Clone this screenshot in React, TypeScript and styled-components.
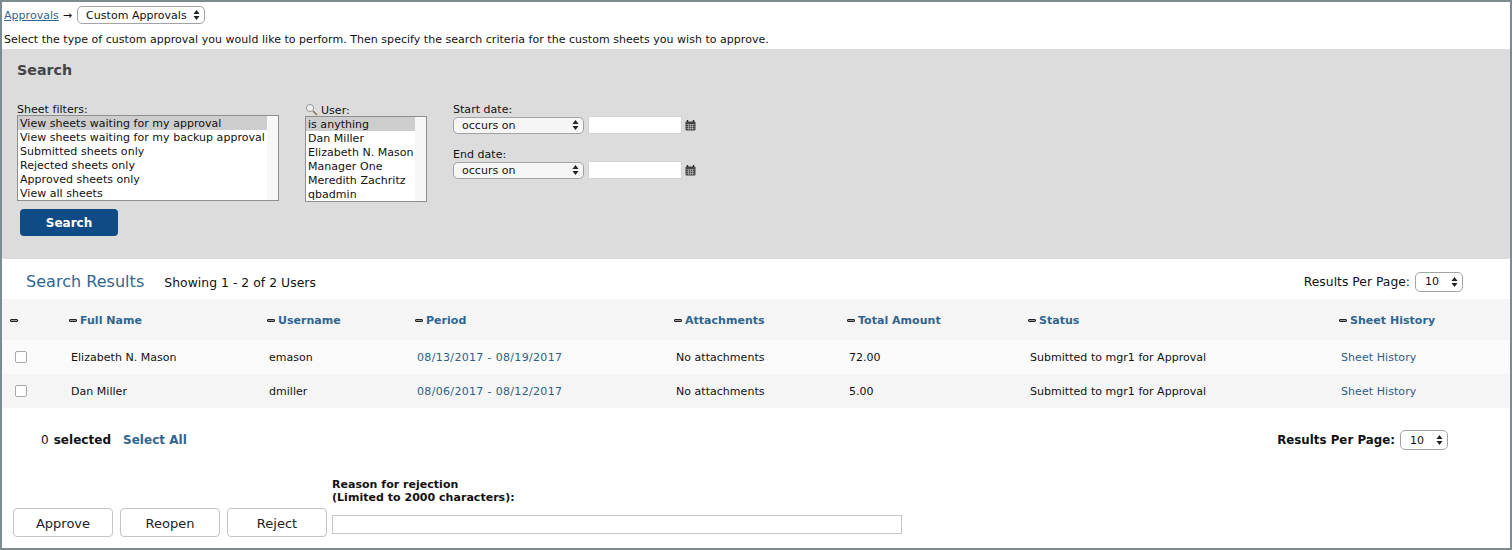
import React from 'react';
import styled, { createGlobalStyle } from 'styled-components';

const GlobalStyle = createGlobalStyle`
    html, body {
        margin: 0;
        padding: 0;
        background: #fff;
    }
    body {
        font-family: "DejaVu Sans", Verdana, sans-serif;
        font-size: 11px;
        letter-spacing: 0.03px;
        color: #111;
    }
`;

const LINK = '#2f6590';

const Frame = styled.div`
    box-sizing: border-box;
    width: 1512px;
    height: 550px;
    border: 2px solid #7d8a8e;
    overflow: hidden;
    background: #fff;
`;

const Breadcrumb = styled.div`
    display: flex;
    align-items: center;
    height: 18px;
    margin-top: 4px;
    padding-left: 2px;
    gap: 4px;
`;
const CrumbLink = styled.a`
    color: ${LINK};
    text-decoration: underline;
`;
const CrumbArrow = styled.span`
    margin-right: 1px;
`;
const Intro = styled.div`
    height: 25px;
    padding: 9px 0 0 2px;
    box-sizing: border-box;
    line-height: 14px;
`;

const SearchPanel = styled.section`
    box-sizing: border-box;
    height: 210px;
    background: #dcdcdc;
    padding: 13px 15px 0;
`;
const PanelTitle = styled.h2`
    margin: 0;
    font-size: 14.2px;
    line-height: 17px;
    font-weight: bold;
    color: #444;
`;
const FilterRow = styled.div`
    display: flex;
    margin-top: 24px;
`;
const FilterColumn = styled.div<{ $width: number }>`
    width: ${p => p.$width}px;
    flex: none;
`;
const FieldLabel = styled.div<{ $height?: number; $lineHeight?: number }>`
    display: flex;
    align-items: flex-start;
    gap: 3px;
    height: ${p => p.$height ?? 13}px;
    line-height: ${p => p.$lineHeight ?? 13}px;
`;
const ListBox = styled.div<{ $width: number }>`
    box-sizing: border-box;
    width: ${p => p.$width}px;
    height: 86px;
    border: 1px solid #8f8f8f;
    background: #fff;
    display: flex;
`;
const ListItems = styled.div`
    flex: 1;
    min-width: 0;
`;
const ListItem = styled.div<{ $selected?: boolean }>`
    height: 14px;
    line-height: 16px;
    padding-left: 2px;
    white-space: nowrap;
    overflow: hidden;
    background: ${p => (p.$selected ? '#cdcdcd' : 'transparent')};
`;
const ListTrack = styled.div`
    width: 11px;
    flex: none;
    background: #f7f7f7;
`;
const SearchButton = styled.button`
    display: block;
    width: 98px;
    height: 27px;
    margin: 8px 0 0 3px;
    padding: 0;
    border: none;
    border-radius: 4px;
    background: #0f4c85;
    color: #fff;
    font: bold 12px "DejaVu Sans", Verdana, sans-serif;
`;

const DateColumn = styled.div`
    display: flex;
    flex-direction: column;
    gap: 14px;
`;
const DateControls = styled.div`
    display: flex;
    align-items: center;
    height: 18px;
`;
const DateInput = styled.div`
    box-sizing: border-box;
    width: 94px;
    height: 18px;
    margin-left: 4px;
    margin-right: 3px;
    background: #fff;
    border: 1px solid #d4d4d4;
`;

const SelectBox = styled.div<{ $width: number; $height: number; $pad: number; $white?: boolean }>`
    box-sizing: border-box;
    position: relative;
    display: flex;
    align-items: center;
    width: ${p => p.$width}px;
    height: ${p => p.$height}px;
    padding-left: ${p => p.$pad}px;
    border: 1px solid #a3a3a3;
    border-radius: 5px;
    background: ${p => (p.$white ? '#fff' : '#f6f6f6')};
    font-size: 11px;
    font-weight: normal;
    color: #111;
    flex: none;
`;
const SelectArrows = styled.svg`
    position: absolute;
    right: 4px;
    top: 50%;
    margin-top: -5px;
`;

const ResultsBar = styled.div`
    display: flex;
    align-items: center;
    height: 40px;
    padding: 5px 47px 0 24px;
    box-sizing: border-box;
`;
const ResultsTitle = styled.h3`
    margin: 0;
    font-size: 16px;
    font-weight: normal;
    color: ${LINK};
`;
const ResultsCount = styled.span`
    margin-left: 20px;
    font-size: 12.4px;
    padding-top: 2px;
`;
const PerPage = styled.div<{ $bold?: boolean }>`
    display: flex;
    align-items: center;
    gap: 5px;
    margin-left: auto;
    font-size: ${p => (p.$bold ? '11.8px' : '12.3px')};
    font-weight: ${p => (p.$bold ? 'bold' : 'normal')};
`;

const COLUMNS = '67px 198px 148px 259px 173px 181px 311px 171px';

const HeaderRow = styled.div`
    box-sizing: border-box;
    display: grid;
    grid-template-columns: ${COLUMNS};
    align-items: center;
    height: 41px;
    padding-top: 2px;
    background: #f5f5f5;
`;
const HeaderCell = styled.div`
    display: flex;
    align-items: center;
    gap: 3px;
    font-weight: bold;
    color: ${LINK};
    white-space: nowrap;
    &:first-child {
        padding-left: 8px;
    }
`;
const SortDash = styled.span`
    display: block;
    width: 8px;
    height: 3px;
    box-sizing: border-box;
    border: 1px solid #222;
    background: #999;
    border-radius: 1px;
`;
const DataRow = styled.div<{ $shaded?: boolean }>`
    display: grid;
    grid-template-columns: ${COLUMNS};
    align-items: center;
    height: 34px;
    background: ${p => (p.$shaded ? '#f5f5f5' : '#fafafa')};
`;
const DataCell = styled.div`
    padding-left: 2px;
    white-space: nowrap;
    &:first-child {
        padding-left: 13px;
    }
`;
const CellLink = styled.a<{ $spaced?: boolean }>`
    color: #2f5d86;
    letter-spacing: ${p => (p.$spaced ? '0.33px' : '0.07px')};
`;
const CheckBox = styled.span`
    display: block;
    box-sizing: border-box;
    width: 12px;
    height: 12px;
    margin-top: -1px;
    background: #fff;
    border: 1px solid #a8a8a8;
    border-radius: 2px;
`;

const SelectionBar = styled.div`
    display: flex;
    align-items: center;
    height: 20px;
    margin-top: 22px;
    padding: 0 62px 0 39px;
    font-size: 12px;
`;
const SelectedCount = styled.span`
    margin-right: 5px;
`;
const Bold = styled.b`
    font-weight: bold;
`;
const SelectAll = styled.a`
    margin-left: 12px;
    font-weight: bold;
    color: ${LINK};
`;

const ActionArea = styled.div`
    display: flex;
    align-items: flex-end;
    margin-top: 28px;
    padding-left: 11px;
`;
const ActionButtons = styled.div`
    display: flex;
    gap: 7px;
`;
const ActionButton = styled.button`
    box-sizing: border-box;
    width: 100px;
    height: 29px;
    padding: 2px 0 0;
    background: #fff;
    border: 1px solid #c4c4c4;
    border-radius: 4px;
    color: #222;
    font: 13px "DejaVu Sans", Verdana, sans-serif;
`;
const ReasonBlock = styled.div`
    margin-left: 5px;
    padding-bottom: 3px;
`;
const ReasonLabel = styled.div`
    font-weight: bold;
    line-height: 13px;
`;
const ReasonInput = styled.div`
    box-sizing: border-box;
    width: 570px;
    height: 19px;
    margin-top: 11px;
    border: 1px solid #c6c6c6;
    background: #fff;
`;

function Arrows() {
    return (
        <SelectArrows width="7" height="10" viewBox="0 0 7 10">
            <path d="M3.5 0 L6.5 4 H0.5 Z M0.5 6 H6.5 L3.5 10 Z" fill="#222" />
        </SelectArrows>
    );
}

function FakeSelect(props: { value: string; width: number; height: number; pad: number; white?: boolean }) {
    return (
        <SelectBox $width={props.width} $height={props.height} $pad={props.pad} $white={props.white}>
            {props.value}
            <Arrows />
        </SelectBox>
    );
}

function MagnifierIcon() {
    return (
        <svg width="13" height="13" viewBox="0 0 13 13">
            <circle cx="5" cy="5" r="3.6" fill="#eef0f2" stroke="#9a9a9a" strokeWidth="1" />
            <path d="M8 8 L12 12" stroke="#8a6d4a" strokeWidth="1.4" />
        </svg>
    );
}

function CalendarIcon() {
    return (
        <svg width="11" height="11" viewBox="0 0 11 11">
            <path d="M2.5 0 V2 M8.5 0 V2" stroke="#222" strokeWidth="1.4" />
            <rect x="0.5" y="1.5" width="10" height="9" rx="1" fill="#444" />
            <path d="M1.5 4.5 H9.5 M1.5 6.5 H9.5 M1.5 8.5 H9.5 M3.5 4 V10 M5.5 4 V10 M7.5 4 V10" stroke="#bbb" strokeWidth="0.6" />
        </svg>
    );
}

const SHEET_FILTERS = [
    'View sheets waiting for my approval',
    'View sheets waiting for my backup approval',
    'Submitted sheets only',
    'Rejected sheets only',
    'Approved sheets only',
    'View all sheets',
];
const USERS = ['is anything', 'Dan Miller', 'Elizabeth N. Mason', 'Manager One', 'Meredith Zachritz', 'qbadmin'];
const HEADERS = ['', 'Full Name', 'Username', 'Period', 'Attachments', 'Total Amount', 'Status', 'Sheet History'];
const ROWS = [
    { name: 'Elizabeth N. Mason', user: 'emason', period: '08/13/2017 - 08/19/2017', total: '72.00' },
    { name: 'Dan Miller', user: 'dmiller', period: '08/06/2017 - 08/12/2017', total: '5.00' },
];

export default function App() {
    return (
        <Frame>
            <GlobalStyle />
            <Breadcrumb>
                <CrumbLink>Approvals</CrumbLink>
                <CrumbArrow>→</CrumbArrow>
                <FakeSelect value="Custom Approvals" width={128} height={18} pad={8} white />
            </Breadcrumb>
            <Intro>Select the type of custom approval you would like to perform. Then specify the search criteria for the custom sheets you wish to approve.</Intro>

            <SearchPanel>
                <PanelTitle>Search</PanelTitle>
                <FilterRow>
                    <FilterColumn $width={288}>
                        <FieldLabel $height={12}>Sheet filters:</FieldLabel>
                        <ListBox $width={262}>
                            <ListItems>
                                {SHEET_FILTERS.map((f, i) => <ListItem key={f} $selected={i === 0}>{f}</ListItem>)}
                            </ListItems>
                            <ListTrack />
                        </ListBox>
                        <SearchButton>Search</SearchButton>
                    </FilterColumn>
                    <FilterColumn $width={148}>
                        <FieldLabel $lineHeight={15}><MagnifierIcon />User:</FieldLabel>
                        <ListBox $width={122}>
                            <ListItems>
                                {USERS.map((u, i) => <ListItem key={u} $selected={i === 0}>{u}</ListItem>)}
                            </ListItems>
                            <ListTrack />
                        </ListBox>
                    </FilterColumn>
                    <DateColumn>
                        {['Start date:', 'End date:'].map(label => (
                            <div key={label}>
                                <FieldLabel>{label}</FieldLabel>
                                <DateControls>
                                    <FakeSelect value="occurs on" width={131} height={17} pad={8} />
                                    <DateInput />
                                    <CalendarIcon />
                                </DateControls>
                            </div>
                        ))}
                    </DateColumn>
                </FilterRow>
            </SearchPanel>

            <ResultsBar>
                <ResultsTitle>Search Results</ResultsTitle>
                <ResultsCount>Showing 1 - 2 of 2 Users</ResultsCount>
                <PerPage>
                    Results Per Page:
                    <FakeSelect value="10" width={48} height={20} pad={9} white />
                </PerPage>
            </ResultsBar>

            <HeaderRow>
                {HEADERS.map(h => (
                    <HeaderCell key={h}>
                        <SortDash />
                        {h}
                    </HeaderCell>
                ))}
            </HeaderRow>
            {ROWS.map((r, i) => (
                <DataRow key={r.user} $shaded={i === 1}>
                    <DataCell><CheckBox /></DataCell>
                    <DataCell>{r.name}</DataCell>
                    <DataCell>{r.user}</DataCell>
                    <DataCell><CellLink $spaced>{r.period}</CellLink></DataCell>
                    <DataCell>No attachments</DataCell>
                    <DataCell>{r.total}</DataCell>
                    <DataCell>Submitted to mgr1 for Approval</DataCell>
                    <DataCell><CellLink>Sheet History</CellLink></DataCell>
                </DataRow>
            ))}

            <SelectionBar>
                <SelectedCount>0</SelectedCount>
                <Bold>selected</Bold>
                <SelectAll>Select All</SelectAll>
                <PerPage $bold>
                    Results Per Page:
                    <FakeSelect value="10" width={48} height={20} pad={9} white />
                </PerPage>
            </SelectionBar>

            <ActionArea>
                <ActionButtons>
                    <ActionButton>Approve</ActionButton>
                    <ActionButton>Reopen</ActionButton>
                    <ActionButton>Reject</ActionButton>
                </ActionButtons>
                <ReasonBlock>
                    <ReasonLabel>Reason for rejection<br />(Limited to 2000 characters):</ReasonLabel>
                    <ReasonInput />
                </ReasonBlock>
            </ActionArea>
        </Frame>
    );
}
